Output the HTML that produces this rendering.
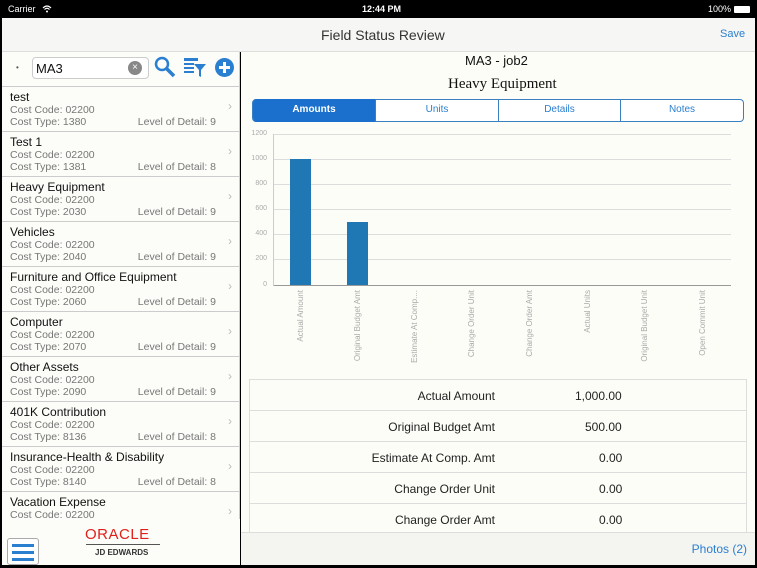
<!DOCTYPE html>
<html><head><style>
*{margin:0;padding:0;box-sizing:border-box}
body{width:757px;height:568px;background:#000;font-family:"Liberation Sans",sans-serif;position:relative;overflow:hidden}
.abs{position:absolute}
#status{left:0;top:0;width:757px;height:18px;background:#000;color:#fff;font-size:9px}
#nav{left:2px;top:18px;width:753px;height:34px;background:#f6f6f4;border-bottom:1px solid #ddd}
#left{left:2px;top:52px;width:238px;height:513px;background:#fcfcf8;border-right:1px solid #ccc}
#right{left:241px;top:52px;width:514px;height:480px;background:#fdfdf8}
.row{position:absolute;left:0;width:238px;height:45px;border-bottom:1px solid #ccc}
.row .t{position:absolute;left:8px;top:3px;font-size:12px;color:#111}
.row .c{position:absolute;left:8px;top:17px;font-size:10.5px;color:#777}
.row .y{position:absolute;left:8px;top:29px;font-size:10.5px;color:#777}
.row .l{position:absolute;right:24px;top:29px;font-size:10.5px;color:#777}
.row .ch{position:absolute;right:8px;top:12px;font-size:12px;color:#bbb}
.tab{position:absolute;top:99px;height:23px;font-size:10px;color:#2a7fd0;text-align:center;line-height:22px;border-left:1px solid #3a80c0}
.grid{position:absolute;left:274px;width:457px;height:1px;background:#ddd}
.yl{position:absolute;left:249px;width:18px;text-align:right;font-size:7px;color:#aaa}
.xl{position:absolute;top:290px;font-size:8px;color:#aaa;writing-mode:vertical-rl;transform:rotate(180deg);white-space:nowrap;width:10px}
.tr{position:absolute;left:250px;width:496px;height:31px;border-bottom:1px solid #ddd;font-size:12px;color:#222}
.tr .a{position:absolute;right:251px;top:9px}
.tr .b{position:absolute;left:325px;top:9px}
</style></head><body>
<div id="status" class="abs"><span class="abs" style="left:8px;top:4px">Carrier</span><svg class="abs" style="left:42px;top:5px" width="10" height="8"><path d="M1 3Q5 -1 9 3M2.5 4.5Q5 2 7.5 4.5" stroke="#fff" fill="none" stroke-width="1.2"/><circle cx="5" cy="6.5" r="1" fill="#fff"/></svg><span class="abs" style="left:362px;top:4px;font-weight:bold">12:44 PM</span><span class="abs" style="left:708px;top:4px">100%</span><span class="abs" style="left:734px;top:6px;width:16px;height:7px;background:#fff;border-radius:1px"></span></div>
<div id="nav" class="abs"><span class="abs" style="left:319px;top:9px;font-size:14px;color:#333">Field Status Review</span><span class="abs" style="left:718px;top:10px;font-size:11px;color:#2a7fd0">Save</span></div>
<div id="left" class="abs">
<div style="position:absolute;left:0;top:0;width:238px;height:35px;border-bottom:1px solid #ccc"></div>
<span class="abs" style="left:14px;top:11px;font-size:8px;color:#555">•</span>
<div class="abs" style="left:30px;top:5px;width:117px;height:22px;border:1px solid #ccc;border-radius:4px;background:#fff"><span class="abs" style="left:3px;top:3px;font-size:13px;color:#111">MA3</span><span class="abs" style="left:95px;top:3px;width:14px;height:14px;border-radius:50%;background:#888;color:#fff;font-size:10px;text-align:center;line-height:14px">×</span></div>
<svg class="abs" style="left:151px;top:3px" width="24" height="24"><circle cx="9" cy="9" r="6" fill="none" stroke="#2a7fd0" stroke-width="2.5"/><line x1="13" y1="13" x2="21" y2="21" stroke="#2a7fd0" stroke-width="3.5"/></svg>
<svg class="abs" style="left:181px;top:5px" width="24" height="22"><rect x="1" y="1" width="14" height="3" fill="#2a7fd0"/><rect x="1" y="6" width="10" height="2" fill="#2a7fd0"/><rect x="1" y="10" width="10" height="2" fill="#2a7fd0"/><rect x="1" y="14" width="10" height="2" fill="#2a7fd0"/><path d="M11 7h12l-5 6v7l-2-1v-6z" fill="#2a7fd0"/></svg>
<svg class="abs" style="left:212px;top:5px" width="21" height="21"><circle cx="10.5" cy="10.5" r="9.5" fill="#2a7fd0"/><path d="M10.5 5v11M5 10.5h11" stroke="#fff" stroke-width="3"/></svg>
<div class="row" style="top:35px"><span class="t">test</span><span class="c">Cost Code: 02200</span><span class="y">Cost Type: 1380</span><span class="l">Level of Detail: 9</span><span class="ch">›</span></div>
<div class="row" style="top:80px"><span class="t">Test 1</span><span class="c">Cost Code: 02200</span><span class="y">Cost Type: 1381</span><span class="l">Level of Detail: 8</span><span class="ch">›</span></div>
<div class="row" style="top:125px"><span class="t">Heavy Equipment</span><span class="c">Cost Code: 02200</span><span class="y">Cost Type: 2030</span><span class="l">Level of Detail: 9</span><span class="ch">›</span></div>
<div class="row" style="top:170px"><span class="t">Vehicles</span><span class="c">Cost Code: 02200</span><span class="y">Cost Type: 2040</span><span class="l">Level of Detail: 9</span><span class="ch">›</span></div>
<div class="row" style="top:215px"><span class="t">Furniture and Office Equipment</span><span class="c">Cost Code: 02200</span><span class="y">Cost Type: 2060</span><span class="l">Level of Detail: 9</span><span class="ch">›</span></div>
<div class="row" style="top:260px"><span class="t">Computer</span><span class="c">Cost Code: 02200</span><span class="y">Cost Type: 2070</span><span class="l">Level of Detail: 9</span><span class="ch">›</span></div>
<div class="row" style="top:305px"><span class="t">Other Assets</span><span class="c">Cost Code: 02200</span><span class="y">Cost Type: 2090</span><span class="l">Level of Detail: 9</span><span class="ch">›</span></div>
<div class="row" style="top:350px"><span class="t">401K Contribution</span><span class="c">Cost Code: 02200</span><span class="y">Cost Type: 8136</span><span class="l">Level of Detail: 8</span><span class="ch">›</span></div>
<div class="row" style="top:395px"><span class="t">Insurance-Health &amp; Disability</span><span class="c">Cost Code: 02200</span><span class="y">Cost Type: 8140</span><span class="l">Level of Detail: 8</span><span class="ch">›</span></div>
<div class="row" style="top:440px"><span class="t">Vacation Expense</span><span class="c">Cost Code: 02200</span><span class="ch">›</span></div>
<div class="abs" style="left:0;top:467px;width:238px;height:46px;background:#fcfcf8"></div>
<div class="abs" style="left:5px;top:486px;width:32px;height:27px;border:1px solid #aaa;border-radius:3px;background:#fff"><div style="margin:5px 4px;height:3px;background:#2a7fd0"></div><div style="margin:-1px 4px;height:3px;background:#2a7fd0"></div><div style="margin:5px 4px;height:3px;background:#2a7fd0"></div></div>
<span class="abs" style="left:83px;top:474px;font-size:15px;color:#e0201b;letter-spacing:0.5px">ORACLE</span>
<div class="abs" style="left:84px;top:492px;width:74px;height:1px;background:#555"></div>
<span class="abs" style="left:93px;top:496px;font-size:8px;font-weight:bold;color:#333">JD EDWARDS</span>
</div>
<div id="right" class="abs"></div>
<div class="abs" style="left:241px;top:532px;width:514px;height:33px;background:#f4f4f0;border-top:1px solid #ddd"><span class="abs" style="right:8px;top:9px;font-size:12px;color:#2a7fd0">Photos (2)</span></div>
<span class="abs" style="left:465px;top:53px;font-size:13px;color:#111">MA3 - job2</span>
<span class="abs" style="left:448px;top:76px;font-size:15px;color:#111;font-family:'Liberation Serif',serif">Heavy Equipment</span>
<div class="abs" style="left:252px;top:99px;width:492px;height:23px;border:1px solid #3a80c0;border-radius:4px;background:#fff;overflow:hidden"></div>
<div class="tab" style="left:253px;width:122px;background:#1b6fcd;color:#fff;font-weight:bold;border:none;border-radius:4px 0 0 4px">Amounts</div>
<div class="tab" style="left:375px;width:123px">Units</div>
<div class="tab" style="left:498px;width:122px">Details</div>
<div class="tab" style="left:620px;width:123px">Notes</div>
<div class="grid" style="top:134px"></div><div class="grid" style="top:159px"></div><div class="grid" style="top:184px"></div><div class="grid" style="top:209px"></div><div class="grid" style="top:234px"></div><div class="grid" style="top:259px"></div><div class="grid" style="top:285px;background:#999"></div>
<div class="abs" style="left:273px;top:134px;width:1px;height:152px;background:#ccc"></div>
<span class="yl" style="top:130px">1200</span><span class="yl" style="top:155px">1000</span><span class="yl" style="top:180px">800</span><span class="yl" style="top:205px">600</span><span class="yl" style="top:230px">400</span><span class="yl" style="top:255px">200</span><span class="yl" style="top:281px">0</span>
<div class="abs" style="left:290px;top:159px;width:21px;height:126px;background:#1f77b4"></div>
<div class="abs" style="left:347px;top:222px;width:21px;height:63px;background:#1f77b4"></div>
<span class="xl" style="left:296px">Actual Amount</span>
<span class="xl" style="left:353px">Original Budget Amt</span>
<span class="xl" style="left:410px">Estimate At Comp....</span>
<span class="xl" style="left:467px">Change Order Unit</span>
<span class="xl" style="left:525px">Change Order Amt</span>
<span class="xl" style="left:583px">Actual Units</span>
<span class="xl" style="left:640px">Original Budget Unit</span>
<span class="xl" style="left:698px">Open Commit Unit</span>
<div class="abs" style="left:249px;top:379px;width:498px;height:153px;border:1px solid #ddd;border-bottom:none;background:#fdfdf8"></div>
<div class="tr" style="top:380px"><span class="a">Actual Amount</span><span class="b">1,000.00</span></div>
<div class="tr" style="top:411px"><span class="a">Original Budget Amt</span><span class="b" style="left:335px">500.00</span></div>
<div class="tr" style="top:442px"><span class="a">Estimate At Comp. Amt</span><span class="b" style="left:349px">0.00</span></div>
<div class="tr" style="top:473px"><span class="a">Change Order Unit</span><span class="b" style="left:349px">0.00</span></div>
<div class="tr" style="top:504px;border:none"><span class="a">Change Order Amt</span><span class="b" style="left:349px">0.00</span></div>
</body></html>
